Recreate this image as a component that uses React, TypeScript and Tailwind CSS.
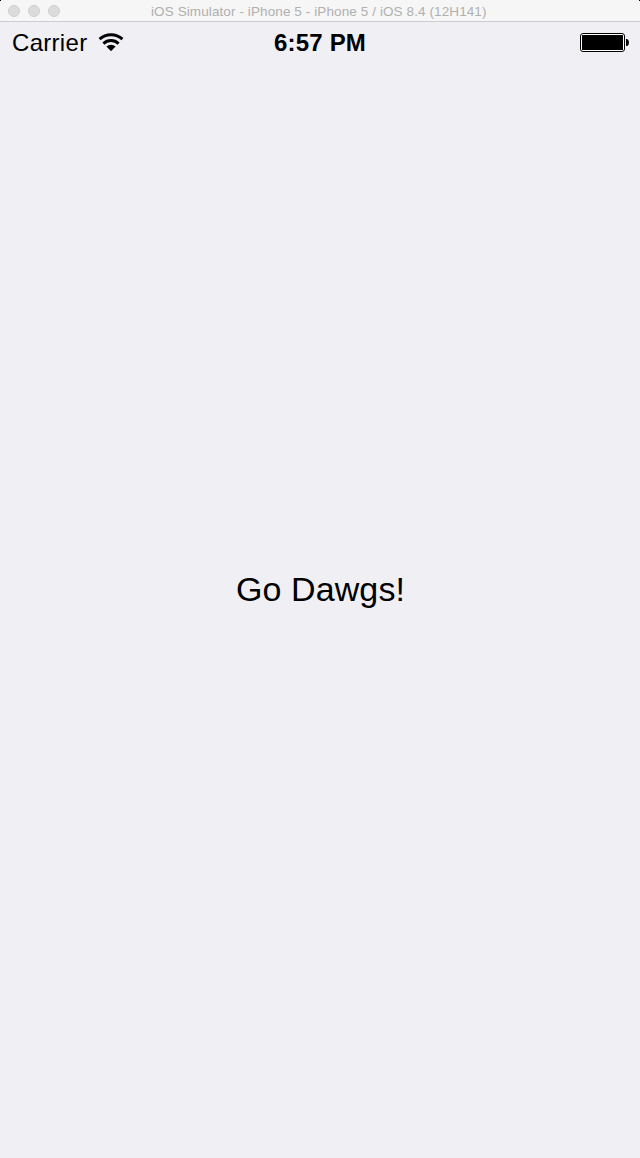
function TitleBar() {
  return (
    <header className="relative flex h-[22px] items-center border-b border-[#cdccd3] bg-[#f6f6f6] pl-2">
      <span className="absolute left-0 top-0 h-px w-px bg-black" />
      <span className="absolute right-0 top-0 h-px w-px bg-black" />
      <div className="flex w-[143px] gap-2">
        <span className="h-3 w-3 rounded-full border border-[#cfcfcf] bg-[#dcdcdc]" />
        <span className="h-3 w-3 rounded-full border border-[#cfcfcf] bg-[#dcdcdc]" />
        <span className="h-3 w-3 rounded-full border border-[#cfcfcf] bg-[#dcdcdc]" />
      </div>
      <h1 className="whitespace-nowrap pt-0.5 text-[13.5px] leading-[20px] tracking-[0.1px] text-[#b0b0b0]">
        iOS Simulator - iPhone 5 - iPhone 5 / iOS 8.4 (12H141)
      </h1>
    </header>
  );
}

function WifiIcon() {
  return (
    <svg className="mb-0.5 h-[18px] w-[26px]" viewBox="0 0 26 18" fill="none" stroke="black">
      <path d="M1.6 6.2A16.8 16.8 0 0 1 24.4 6.2" strokeWidth="3" />
      <path d="M5.4 10.6A11 11 0 0 1 20.6 10.6" strokeWidth="2.9" />
      <path d="M8.4 13.6A6.6 6.6 0 0 1 17.6 13.6L13 18.2Z" fill="black" stroke="none" />
    </svg>
  );
}

function Battery() {
  return (
    <svg className="h-5 w-[50px]" viewBox="0 0 50 20">
      <rect x="0.5" y="0.5" width="44" height="18" rx="2.5" fill="white" stroke="black" />
      <rect x="2" y="2" width="41" height="15" rx="0.5" fill="black" />
      <path d="M46 6h1.2Q49 7 49 9.5T47.2 13H46Z" fill="black" />
    </svg>
  );
}

export default function App() {
  return (
    <div className="flex h-[1158px] w-[640px] flex-col overflow-hidden bg-[#efeff4] font-['Liberation_Sans',Arial,sans-serif] text-black">
      <TitleBar />
      <div className="grid h-[42px] grid-cols-[1fr_120px_1fr] items-center px-[10px]">
        <div className="flex items-center gap-[10.5px] pl-0.5">
          <span className="text-2xl leading-10 tracking-[0.3px]">Carrier</span>
          <WifiIcon />
        </div>
        <time className="text-center text-2xl font-bold leading-10 tracking-[0.2px]">6:57 PM</time>
        <div className="flex justify-end">
          <Battery />
        </div>
      </div>
      <main className="flex flex-1 justify-center pt-[505px]">
        <p className="h-10 pl-px text-[34px] leading-10 tracking-[0.1px]">Go Dawgs!</p>
      </main>
    </div>
  );
}
